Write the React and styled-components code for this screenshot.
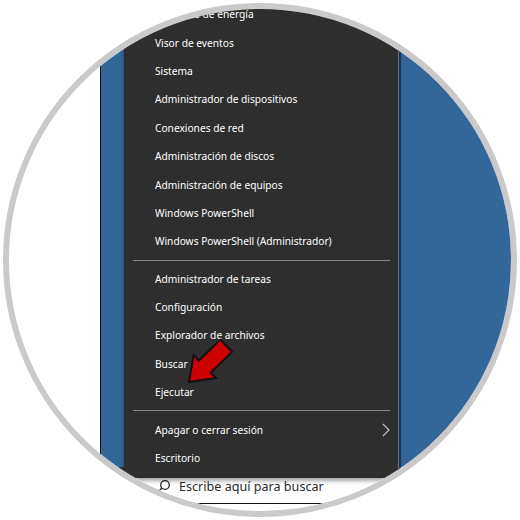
import React from "react";
import styled, { createGlobalStyle } from "styled-components";

const Global = createGlobalStyle`
  html, body { margin: 0; padding: 0; background: #ffffff; }
  body { width: 520px; height: 520px; overflow: hidden; }
`;

const Stage = styled.div`
  position: relative;
  width: 520px;
  height: 520px;
  display: flex;
  align-items: center;
  justify-content: center;
  background: #ffffff;
`;

const Lens = styled.div`
  width: 514px;
  height: 514px;
  box-sizing: border-box;
  border: 6px solid #cacaca;
  border-radius: 50%;
  overflow: hidden;
  background: #ffffff;
`;

const Screen = styled.div`
  margin-left: 91px;
  margin-top: -9px;
  width: 430px;
  display: flex;
  flex-direction: column;
`;

const Desktop = styled.div`
  display: flex;
  height: 478px;
`;

const Strip = styled.div`
  display: flex;
  flex-direction: column;
  box-sizing: border-box;
  width: ${(p) => (p.$grow ? "auto" : "24px")};
  flex: ${(p) => (p.$grow ? "1" : "none")};
  border-left: ${(p) => p.$edge};
`;

const Wallpaper = styled.div`
  flex: 1;
  background: #336699;
`;

const StripFoot = styled.div`
  height: 11px;
  background: ${(p) => p.$color};
`;

const Menu = styled.div`
  position: relative;
  z-index: 2;
  width: 275px;
  box-sizing: border-box;
  background: #2e2e2e;
  border-right: 1px solid #6e6e6e;
  box-shadow: 0 3px 4px rgba(0, 0, 0, 0.35);
  display: flex;
  flex-direction: column;
`;

const Item = styled.div`
  height: 28.4px;
  display: flex;
  align-items: center;
  padding: 0 8px 0 31px;
  color: #ffffff;
  font-family: "Noto Sans", "Open Sans", sans-serif;
  font-size: 10.2px;
  white-space: nowrap;
`;

const Chevron = styled.svg`
  margin-left: auto;
  display: block;
`;

const Separator = styled.div`
  height: 1px;
  margin: 4px 8px 4px 9px;
  background: #858585;
`;

const Taskbar = styled.div`
  display: flex;
  height: 30px;
  background: #ffffff;
`;

const StartArea = styled.div`
  width: 24px;
  background: #2f2f2f;
`;

const SearchBox = styled.div`
  flex: 1;
  height: 26px;
  box-sizing: border-box;
  display: flex;
  align-items: flex-start;
  gap: 8px;
  padding: 1px 0 0 32px;
  border-bottom: 1px solid #111111;
  background: #ffffff;
`;

const SearchIcon = styled.svg`
  display: block;
`;

const SearchText = styled.span`
  font-family: "Noto Sans", "Open Sans", sans-serif;
  font-size: 12.6px;
  line-height: 16px;
  color: #2a2a2a;
  white-space: nowrap;
`;

const Overlay = styled.svg`
  position: absolute;
  left: 0;
  top: 0;
  z-index: 5;
  pointer-events: none;
`;

const groups = [
  [
    "Opciones de energía",
    "Visor de eventos",
    "Sistema",
    "Administrador de dispositivos",
    "Conexiones de red",
    "Administración de discos",
    "Administración de equipos",
    "Windows PowerShell",
    "Windows PowerShell (Administrador)",
  ],
  [
    "Administrador de tareas",
    "Configuración",
    "Explorador de archivos",
    "Buscar",
    "Ejecutar",
  ],
  ["Apagar o cerrar sesión", "Escritorio"],
];

export default function App() {
  return (
    <>
      <Global />
      <Stage>
        <Lens>
          <Screen>
            <Desktop>
              <Strip $edge="1px solid #111">
                <Wallpaper />
                <StripFoot $color="#2f2f2f" />
              </Strip>
              <Menu>
                {groups.map((g, gi) => (
                  <React.Fragment key={gi}>
                    {gi > 0 && <Separator />}
                    {g.map((label) => (
                      <Item key={label}>
                        {label}
                        {label === "Apagar o cerrar sesión" && (
                          <Chevron width="8" height="14" viewBox="0 0 8 14">
                            <polyline
                              points="1,1 7,7 1,13"
                              fill="none"
                              stroke="#c4c4c4"
                              strokeWidth="1.1"
                            />
                          </Chevron>
                        )}
                      </Item>
                    ))}
                  </React.Fragment>
                ))}
              </Menu>
              <Strip $grow $edge="2px solid #1d3c62">
                <Wallpaper />
                <StripFoot $color="#ffffff" />
              </Strip>
            </Desktop>
            <Taskbar>
              <StartArea />
              <SearchBox>
                <SearchIcon width="15" height="15" viewBox="0 0 15 15">
                  <circle cx="9" cy="6" r="4.3" fill="none" stroke="#222" strokeWidth="1.3" />
                  <line x1="5.9" y1="9.1" x2="1.5" y2="13.5" stroke="#222" strokeWidth="1.4" />
                </SearchIcon>
                <SearchText>Escribe aquí para buscar</SearchText>
              </SearchBox>
            </Taskbar>
          </Screen>
        </Lens>
        <Overlay width="520" height="520" viewBox="0 0 520 520">
          <polygon
            points="189,382 193.6,355.1 198.9,360.5 220.4,339.6 232.2,351.8 210.7,372.7 216,378"
            fill="#cc0000"
            stroke="#111"
            strokeWidth="2"
            strokeLinejoin="miter"
          />
        </Overlay>
      </Stage>
    </>
  );
}
